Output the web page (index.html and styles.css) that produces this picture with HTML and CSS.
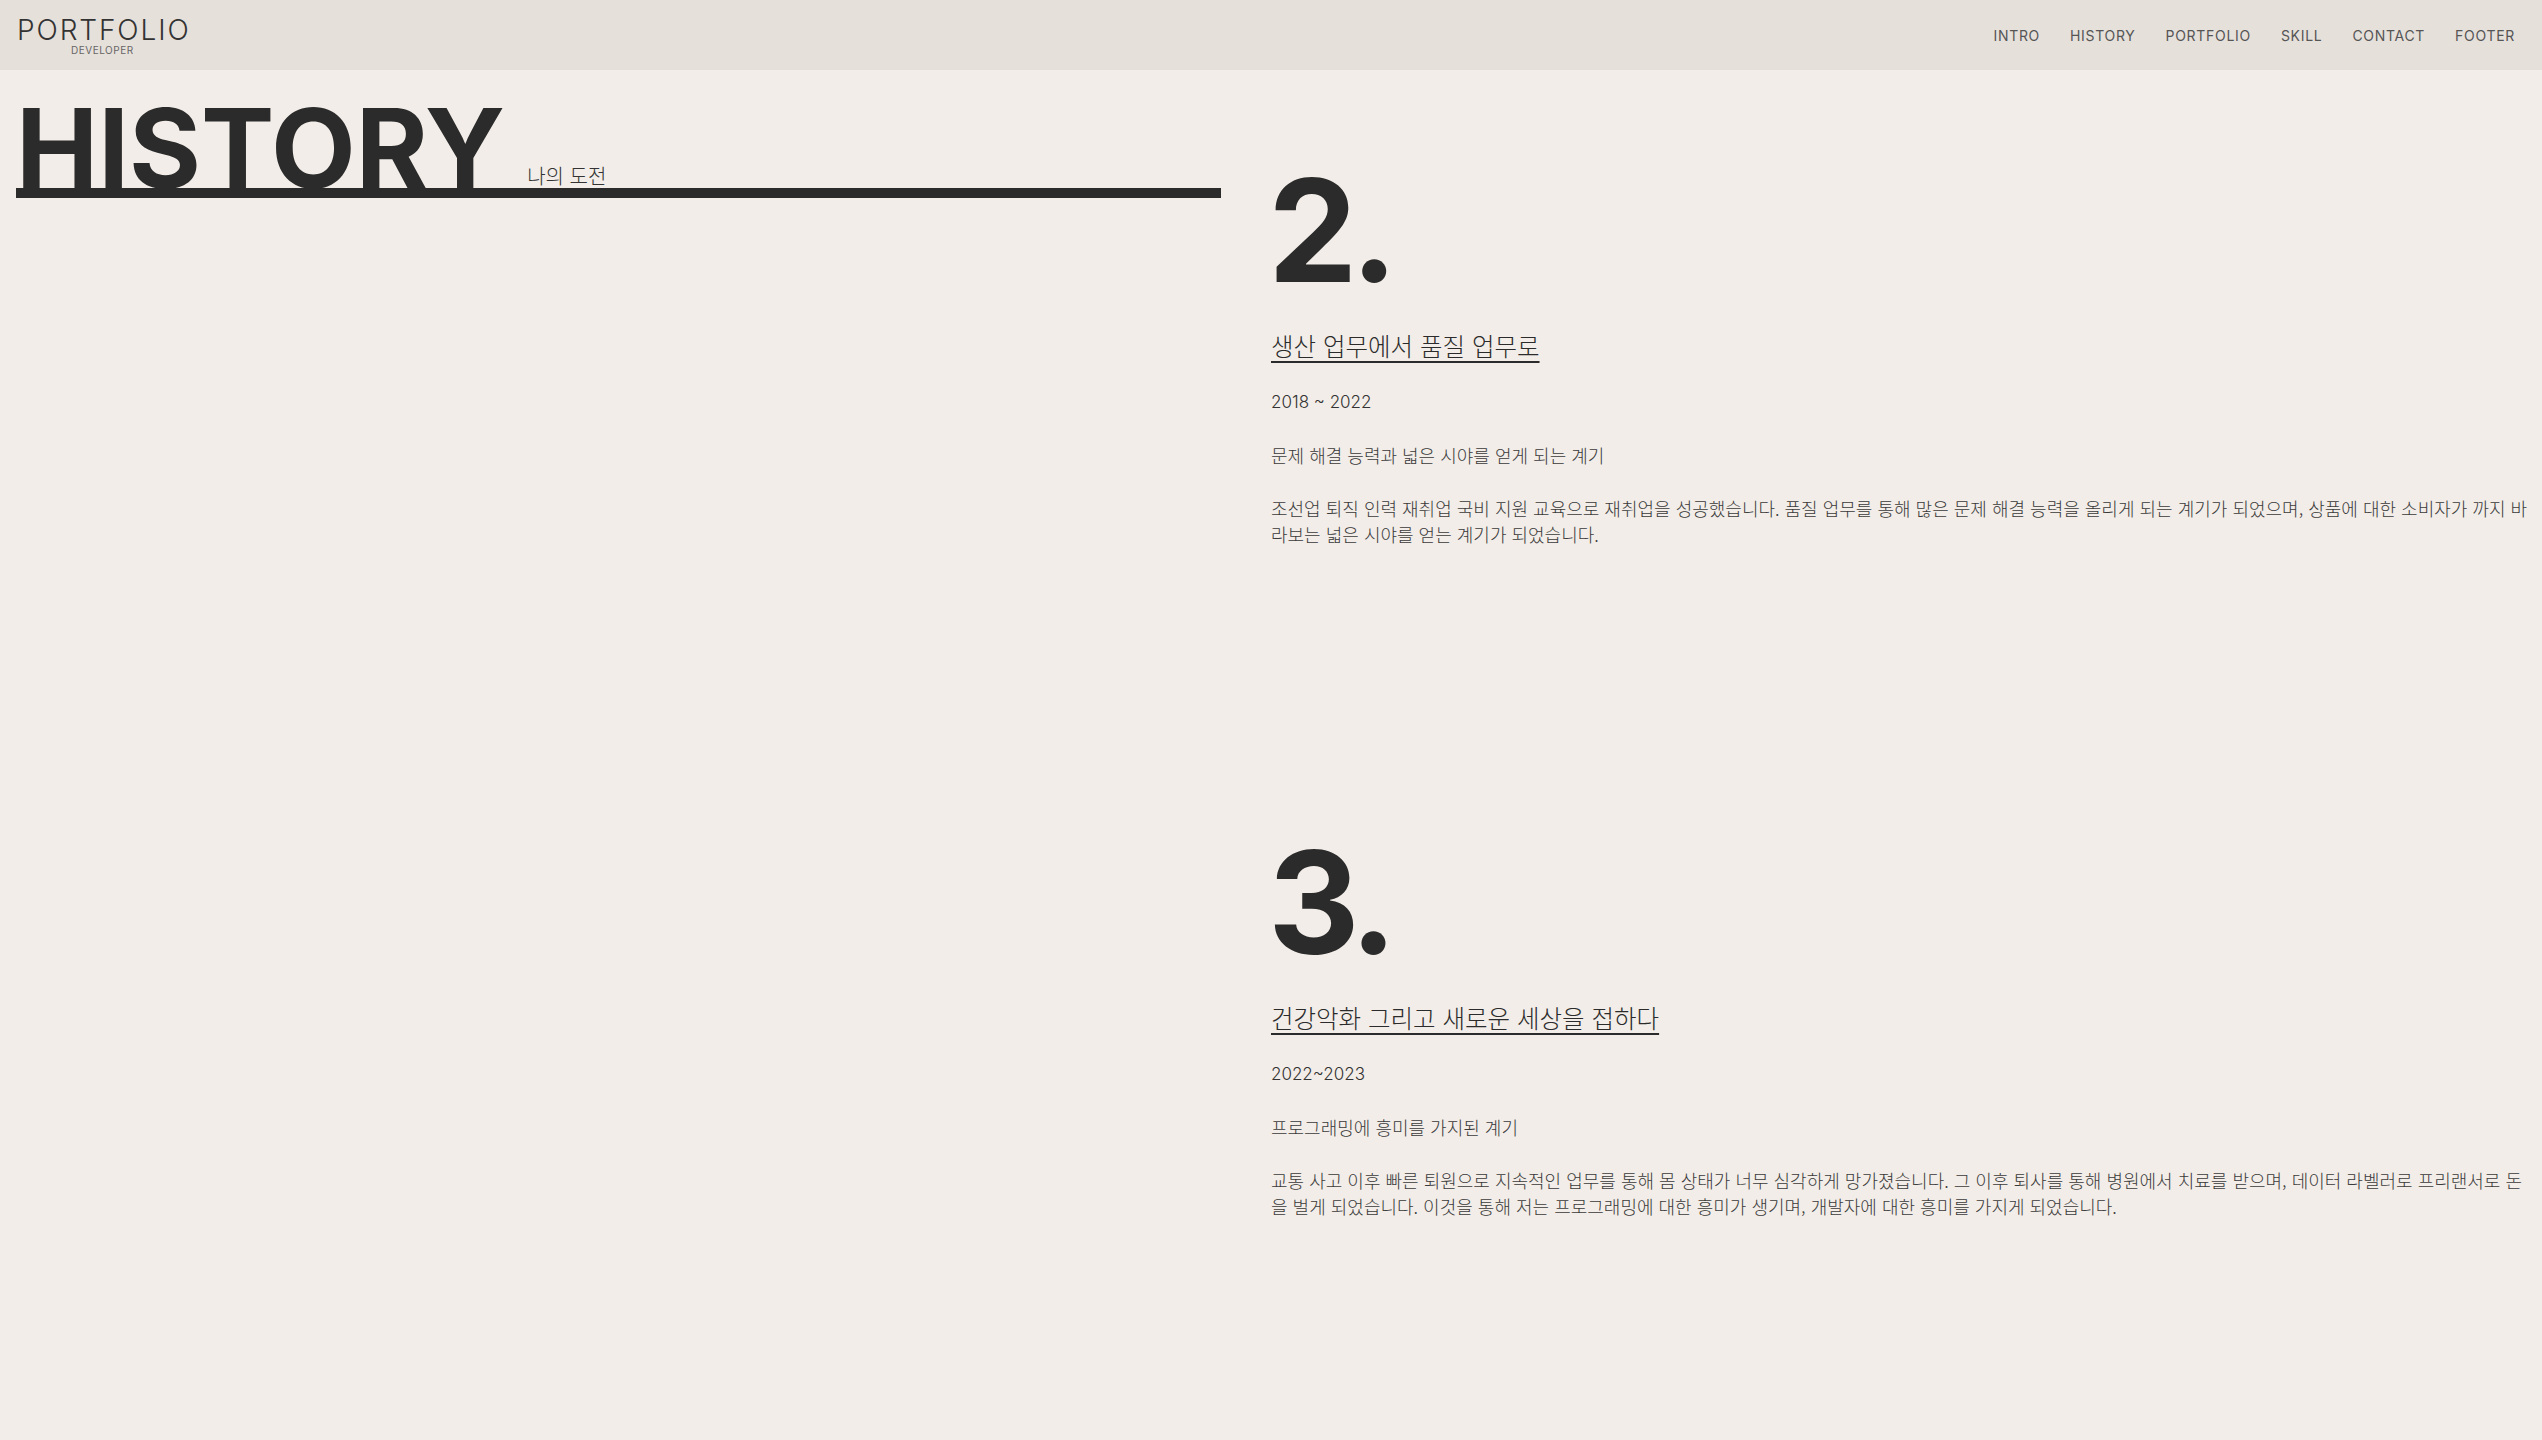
FILE: index.html
```html
<!DOCTYPE html>
<html lang="ko">
<head>
<meta charset="utf-8">
<title>PORTFOLIO - HISTORY</title>
<link rel="stylesheet" href="styles.css">
</head>
<body>
<header class="site-header">
  <div class="logo">
    <span class="logo-main">PORTFOLIO</span>
    <span class="logo-sub">DEVELOPER</span>
  </div>
  <nav class="nav">
    <ul class="nav-list">
      <li><a href="#intro">INTRO</a></li>
      <li><a href="#history">HISTORY</a></li>
      <li><a href="#portfolio">PORTFOLIO</a></li>
      <li><a href="#skill">SKILL</a></li>
      <li><a href="#contact">CONTACT</a></li>
      <li><a href="#footer">FOOTER</a></li>
    </ul>
  </nav>
</header>

<main class="history" id="history">
  <div class="history-head">
    <div class="title-row">
      <h2 class="title">HISTORY</h2>
      <span class="title-sub">나의 도전</span>
    </div>
  </div>

  <div class="items">
    <article class="item">
      <div class="num">2.</div>
      <h3 class="item-title">생산 업무에서 품질 업무로</h3>
      <p class="date">2018 ~ 2022</p>
      <p class="ko">문제 해결 능력과 넓은 시야를 얻게 되는 계기</p>
      <p class="ko">조선업 퇴직 인력 재취업 국비 지원 교육으로 재취업을 성공했습니다. 품질 업무를 통해 많은 문제 해결 능력을 올리게 되는 계기가 되었으며, 상품에 대한 소비자가 까지 바라보는 넓은 시야를 얻는 계기가 되었습니다.</p>
    </article>
    <article class="item">
      <div class="num">3.</div>
      <h3 class="item-title">건강악화 그리고 새로운 세상을 접하다</h3>
      <p class="date">2022~2023</p>
      <p class="ko">프로그래밍에 흥미를 가지된 계기</p>
      <p class="ko">교통 사고 이후 빠른 퇴원으로 지속적인 업무를 통해 몸 상태가 너무 심각하게 망가졌습니다. 그 이후 퇴사를 통해 병원에서 치료를 받으며, 데이터 라벨러로 프리랜서로 돈을 벌게 되었습니다. 이것을 통해 저는 프로그래밍에 대한 흥미가 생기며, 개발자에 대한 흥미를 가지게 되었습니다.</p>
    </article>
  </div>
</main>
</body>
</html>
```

FILE: styles.css
```css
* { box-sizing: border-box; }

html, body {
  margin: 0;
  padding: 0;
}

body {
  background: #f2ede8;
  color: #2b2b2b;
  font-family: "Inter", "Noto Sans CJK KR", sans-serif;
}

/* Header */
.site-header {
  height: 70px;
  background: #e6e0db;
  display: flex;
  justify-content: space-between;
  align-items: center;
  padding: 0 27px 0 16px;
}

.logo {
  align-self: flex-start;
  padding-top: 16px;
  display: flex;
  flex-direction: column;
  align-items: center;
}

.logo-main {
  font-size: 28px;
  line-height: 28px;
  font-weight: 300;
  letter-spacing: 1.9px;
  margin-right: -1.9px;
  margin-left: 1px;
  color: #333;
}

.logo-sub {
  font-size: 10px;
  line-height: 12px;
  font-weight: 400;
  letter-spacing: 0.5px;
  color: #666;
}

.nav-list {
  list-style: none;
  margin: 0;
  padding: 0;
  display: flex;
  gap: 30px;
}

.nav-list a {
  text-decoration: none;
  color: #555;
  font-size: 14px;
  line-height: 20px;
  font-weight: 400;
  letter-spacing: 0.7px;
}

/* History layout */
.history {
  display: grid;
  grid-template-columns: 1fr 1fr;
}

.history-head {
  padding: 38px 50px 0 16px;
}

.title-row {
  display: flex;
  align-items: flex-end;
  border-bottom: 10px solid #2b2b2b;
}

.title {
  margin: 0;
  font-size: 110px;
  line-height: 80px;
  font-weight: 700;
  color: #2b2b2b;
  letter-spacing: 0;
}

.title-sub {
  margin-left: 22px;
  font-family: "Noto Sans CJK KR", sans-serif;
  font-size: 20px;
  line-height: 24px;
  font-weight: 300;
  color: #333;
}

.items {
  padding: 85px 9px 0 0;
}

.item {
  min-height: 672px;
}

.item:last-child {
  min-height: 0;
}

.num {
  margin-left: -3px;
  font-size: 142px;
  line-height: 150px;
  font-weight: 700;
  letter-spacing: -7px;
  color: #2b2b2b;
}

.item-title {
  margin: 25px 0 0;
  font-family: "Noto Sans CJK KR", sans-serif;
  font-size: 24.5px;
  line-height: 32px;
  font-weight: 300;
  color: #2b2b2b;
  text-decoration: underline;
  text-decoration-thickness: 2px;
  text-underline-offset: 5px;
}

.date {
  margin: 27px 0 0;
  font-size: 17px;
  line-height: 26px;
  font-weight: 300;
  color: #333;
}

.ko {
  margin: 27px 0 0;
  font-family: "Noto Sans CJK KR", sans-serif;
  font-size: 18px;
  line-height: 26px;
  font-weight: 300;
  color: #3a3a3a;
}
```
